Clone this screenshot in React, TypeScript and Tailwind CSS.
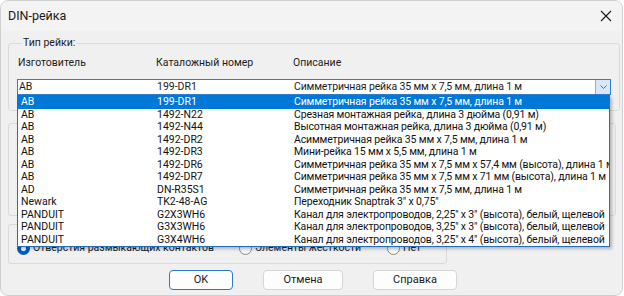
import React from 'react';

type Rail = { maker: string; part: string; desc: string };

const rails: Rail[] = [
    { maker: 'AB', part: '199-DR1', desc: 'Симметричная рейка 35 мм x 7,5 мм, длина 1 м' },
    { maker: 'AB', part: '1492-N22', desc: 'Срезная монтажная рейка, длина 3 дюйма (0,91 м)' },
    { maker: 'AB', part: '1492-N44', desc: 'Высотная монтажная рейка, длина 3 дюйма (0,91 м)' },
    { maker: 'AB', part: '1492-DR2', desc: 'Асимметричная рейка 35 мм x 7,5 мм, длина 1 м' },
    { maker: 'AB', part: '1492-DR3', desc: 'Мини-рейка 15 мм x 5,5 мм, длина 1 м' },
    { maker: 'AB', part: '1492-DR6', desc: 'Симметричная рейка 35 мм x 7,5 мм x 57,4 мм (высота), длина 1 м' },
    { maker: 'AB', part: '1492-DR7', desc: 'Симметричная рейка 35 мм x 7,5 мм x 71 мм (высота), длина 1 м' },
    { maker: 'AD', part: 'DN-R35S1', desc: 'Симметричная рейка 35 мм x 7,5 мм, длина 1 м' },
    { maker: 'Newark', part: 'TK2-48-AG', desc: 'Переходник Snaptrak 3" x 0,75"' },
    { maker: 'PANDUIT', part: 'G2X3WH6', desc: 'Канал для электропроводов, 2,25" x 3" (высота), белый, щелевой' },
    { maker: 'PANDUIT', part: 'G3X3WH6', desc: 'Канал для электропроводов, 3,25" x 3" (высота), белый, щелевой' },
    { maker: 'PANDUIT', part: 'G3X4WH6', desc: 'Канал для электропроводов, 3,25" x 4" (высота), белый, щелевой' },
];

const font = { fontFamily: 'Roboto, "Noto Sans", sans-serif' };

function Radio({ checked, label }: { checked?: boolean; label: string }) {
    return (
        <div className="flex items-center gap-[3px]">
            {checked ? (
                <span className="flex h-[13px] w-[13px] items-center justify-center rounded-full bg-[#005fb8]">
                    <span className="h-[5px] w-[5px] rounded-full bg-white" />
                </span>
            ) : (
                <span className="h-[13px] w-[13px] rounded-full border border-[#8a8a8a] bg-[#f7f7f7]" />
            )}
            <span>{label}</span>
        </div>
    );
}

function Button({ label, primary, width }: { label: string; primary?: boolean; width: string }) {
    return (
        <button
            className={`h-[20px] ${width} rounded-[4px] bg-[#fdfdfd] text-[11px] text-[#1b1b1b] ${primary ? 'border border-[#2a79c8]' : 'border border-[#d6d6d6]'}`}
        >
            {label}
        </button>
    );
}

export default function App() {
    return (
        <div className="h-[296px] w-[624px] bg-white" style={font}>
            <div className="relative h-[296px] w-[623px] overflow-hidden rounded-[8px] border border-[#cfcfcf] bg-[#f0f0f0] text-[10.5px] leading-[14px] text-[#1b1b1b]">
                {/* title bar */}
                <div className="flex h-[30px] items-center justify-between bg-[#f3f3f3] pl-[7px] pr-[9px]">
                    <span className="text-[12.5px]">DIN-рейка</span>
                    <svg width="12" height="12" viewBox="0 0 12 12" className="mr-[1px]">
                        <path d="M1 1 L11 11 M11 1 L1 11" stroke="#1b1b1b" strokeWidth="1.1" />
                    </svg>
                </div>

                <div className="px-[7px]">
                    <fieldset className="mt-[5px] h-[75px] w-[608px] rounded-[3px] border border-[#dadada] px-[8px]">
                        <legend className="ml-[5px] px-[1px] leading-[14px]">Тип рейки:</legend>
                        <div className="mt-[6px] flex leading-[14px]">
                            <span className="w-[139px] pl-[1px]">Изготовитель</span>
                            <span className="w-[137px]">Каталожный номер</span>
                            <span>Описание</span>
                        </div>
                        <div className="mt-[9px] flex h-[16px] w-[594px] items-center border border-[#2f7fd0] bg-white">
                            <span className="w-[139px] pl-[1px]">AB</span>
                            <span className="w-[137px]">199-DR1</span>
                            <span className="flex-1 tracking-[-0.15px]">Симметричная рейка 35 мм x 7,5 мм, длина 1 м</span>
                            <span className="flex h-[14px] w-[15px] items-center justify-center border-l border-[#7eb4ea] bg-[#d6e8f9]">
                                <svg width="7" height="4" viewBox="0 0 7 4">
                                    <path d="M0.5 0.5 L3.5 3.5 L6.5 0.5" stroke="#5f6b78" strokeWidth="1" fill="none" />
                                </svg>
                            </span>
                        </div>
                    </fieldset>

                    <fieldset className="mt-[5px] h-[100px] w-[608px] rounded-[3px] border border-[#dadada] px-[8px]">
                        <legend className="ml-[5px] px-[1px] leading-[14px]">Размеры</legend>
                    </fieldset>

                    <fieldset className="mt-[1px] h-[47px] w-[439px] rounded-[3px] border border-[#dadada] px-[8px]">
                        <legend className="ml-[5px] px-[1px] leading-[14px]">Вид</legend>
                        <div className="mt-[10px] flex">
                            <div className="w-[222px]">
                                <Radio checked label="Отверстия размыкающих контактов" />
                            </div>
                            <div className="w-[148px]">
                                <Radio label="Элементы жесткости" />
                            </div>
                            <Radio label="Нет" />
                        </div>
                    </fieldset>

                    <div className="mt-[6px] flex pl-[161px]">
                        <Button label="OK" primary width="w-[64px]" />
                        <div className="ml-[30px]">
                            <Button label="Отмена" width="w-[80px]" />
                        </div>
                        <div className="ml-[30px]">
                            <Button label="Справка" width="w-[84px]" />
                        </div>
                    </div>
                </div>

                {/* open dropdown list lies over the dialog */}
                <div className="absolute left-[16px] top-[94px] w-[593px] overflow-hidden border border-[#1f6fc0] bg-white shadow-[2px_2px_3px_rgba(0,0,0,0.25)]">
                    {rails.map((r, i) => (
                        <div
                            key={r.part}
                            className={`flex h-[12.5px] items-center whitespace-nowrap leading-[12.5px] ${i === 0 ? 'bg-[#0078d7] text-white' : 'text-[#111]'}`}
                        >
                            <span className="w-[139px] shrink-0 pl-[3px]">{r.maker}</span>
                            <span className="w-[137px] shrink-0">{r.part}</span>
                            <span className="shrink-0 tracking-[-0.15px]">{r.desc}</span>
                        </div>
                    ))}
                </div>
            </div>
        </div>
    );
}
